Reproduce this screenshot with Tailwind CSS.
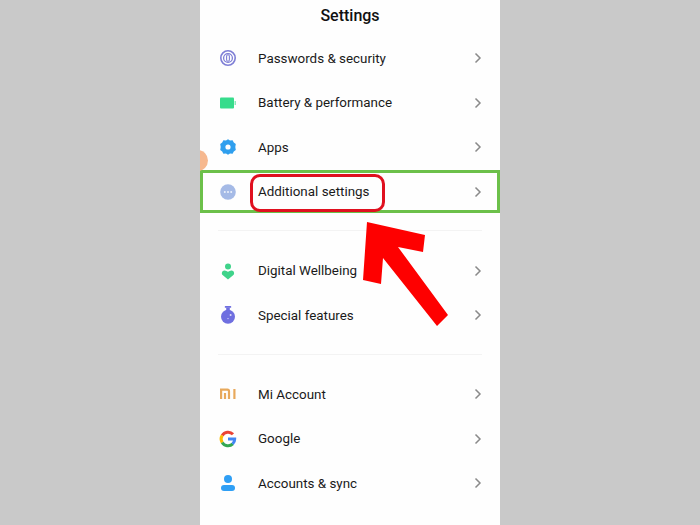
<!DOCTYPE html>
<html>
<head>
<meta charset="utf-8">
<script src="https://cdn.jsdelivr.net/npm/@tailwindcss/browser@4"></script>
</head>
<body class="m-0 bg-[#c9c9c9]">
<div class="relative flex justify-center w-[700px] h-[525px] overflow-hidden bg-[#c9c9c9] font-['Roboto','Liberation_Sans',sans-serif] text-[#1a1a1a]">
  <main class="relative w-[300px] h-[525px] bg-[#fefefe] overflow-hidden">
    <h1 class="h-[36px] pt-[5px] text-center text-[16px] leading-[22px] font-medium text-[#111]">Settings</h1>

    <div class="flex items-center h-[44.5px] pl-[18px] pr-[18px]">
      <svg class="w-[20px] h-[20px] mr-[20px]" viewBox="0 0 20 20" fill="none" stroke="#7f7fd6"><circle cx="10" cy="10" r="7.2" stroke-width="1.6"/><circle cx="10" cy="10" r="4.4" stroke-width="1.3"/><rect x="8.6" y="6.8" width="2.8" height="6.4" rx="1.4" stroke-width="1.1"/></svg>
      <span class="flex-1 pt-[1px] text-[13.4px] leading-[20px]">Passwords &amp; security</span>
      <svg class="w-[8px] h-[12px]" viewBox="0 0 8 12" fill="none" stroke="#8a8a8a" stroke-width="1.5"><path d="M1.5 1.5 L6 6 L1.5 10.5"/></svg>
    </div>

    <div class="flex items-center h-[44.5px] pl-[18px] pr-[18px]">
      <svg class="w-[20px] h-[20px] mr-[20px]" viewBox="0 0 20 20"><rect x="2" y="4.5" width="14" height="11" rx="1" fill="#37dc8c"/><rect x="16.5" y="8" width="1.5" height="4" fill="#8de8bb"/></svg>
      <span class="flex-1 pt-[1px] text-[13.4px] leading-[20px]">Battery &amp; performance</span>
      <svg class="w-[8px] h-[12px]" viewBox="0 0 8 12" fill="none" stroke="#8a8a8a" stroke-width="1.5"><path d="M1.5 1.5 L6 6 L1.5 10.5"/></svg>
    </div>

    <div class="flex items-center h-[44.5px] pl-[18px] pr-[18px]">
      <svg class="w-[20px] h-[20px] mr-[20px]" viewBox="0 0 20 20"><path fill="#2f9fee" fill-rule="evenodd" d="M10 2.2 L12 3.4 L14.6 3.3 L15.8 5.6 L17.8 7 L17.3 10 L17.8 13 L15.8 14.4 L14.6 16.7 L12 16.6 L10 17.8 L8 16.6 L5.4 16.7 L4.2 14.4 L2.2 13 L2.7 10 L2.2 7 L4.2 5.6 L5.4 3.3 L8 3.4 Z M10 7.4 A2.6 2.6 0 1 0 10 12.6 A2.6 2.6 0 1 0 10 7.4 Z"/></svg>
      <span class="flex-1 pt-[1px] text-[13.4px] leading-[20px]">Apps</span>
      <svg class="w-[8px] h-[12px]" viewBox="0 0 8 12" fill="none" stroke="#8a8a8a" stroke-width="1.5"><path d="M1.5 1.5 L6 6 L1.5 10.5"/></svg>
    </div>

    <div class="relative flex items-center h-[44.5px] pl-[18px] pr-[18px]">
      <svg class="w-[20px] h-[20px] mr-[20px]" viewBox="0 0 20 20"><circle cx="10" cy="10" r="7.8" fill="#a5bae6"/><circle cx="6.8" cy="10" r="1" fill="#eef2fb"/><circle cx="10" cy="10" r="1" fill="#eef2fb"/><circle cx="13.2" cy="10" r="1" fill="#eef2fb"/></svg>
      <span class="flex-1 pt-[1px] text-[13.4px] leading-[20px]">Additional settings</span>
      <svg class="w-[8px] h-[12px]" viewBox="0 0 8 12" fill="none" stroke="#8a8a8a" stroke-width="1.5"><path d="M1.5 1.5 L6 6 L1.5 10.5"/></svg>
      <div class="absolute left-0 right-0 top-[0.5px] h-[43px] border-[3px] border-[#6cc04a]"></div>
      <div class="absolute left-[50px] top-[4px] w-[135px] h-[38px] rounded-[10px] border-[3px] border-[#e0101f]"></div>
    </div>

    <div class="h-[34.25px] pt-[16px] px-[18px]"><div class="h-px bg-[#f3f3f3]"></div></div>

    <div class="flex items-center h-[44.5px] pl-[18px] pr-[18px]">
      <svg class="w-[20px] h-[20px] mr-[20px]" viewBox="0 0 20 20" fill="#3fd38a"><circle cx="10" cy="5.4" r="3"/><path d="M10 18.6 L4.6 14 C3 12.2 4.2 9.2 6.6 9.4 C8 9.5 9 10.2 10 10.8 C11 10.2 12 9.5 13.4 9.4 C15.8 9.2 17 12.2 15.4 14 Z"/></svg>
      <span class="flex-1 pt-[1px] text-[13.4px] leading-[20px]">Digital Wellbeing</span>
      <svg class="w-[8px] h-[12px]" viewBox="0 0 8 12" fill="none" stroke="#8a8a8a" stroke-width="1.5"><path d="M1.5 1.5 L6 6 L1.5 10.5"/></svg>
    </div>

    <div class="flex items-center h-[44.5px] pl-[18px] pr-[18px]">
      <svg class="w-[20px] h-[20px] mr-[20px]" viewBox="0 0 20 20"><rect x="6.8" y="1" width="6.4" height="1.8" rx="0.6" fill="#6f6fe0"/><rect x="8.2" y="2.5" width="3.6" height="4" fill="#6f6fe0"/><circle cx="10" cy="11.8" r="7" fill="#6f6fe0"/><circle cx="12.6" cy="10" r="1" fill="#dcdcf8"/><circle cx="10" cy="13.6" r="0.7" fill="#dcdcf8"/></svg>
      <span class="flex-1 pt-[1px] text-[13.4px] leading-[20px]">Special features</span>
      <svg class="w-[8px] h-[12px]" viewBox="0 0 8 12" fill="none" stroke="#8a8a8a" stroke-width="1.5"><path d="M1.5 1.5 L6 6 L1.5 10.5"/></svg>
    </div>

    <div class="h-[34.5px] pt-[16.5px] px-[18px]"><div class="h-px bg-[#f3f3f3]"></div></div>

    <div class="flex items-center h-[44.5px] pl-[18px] pr-[18px]">
      <svg class="w-[20px] h-[20px] mr-[20px]" viewBox="0 0 20 20" fill="none" stroke="#e8a95c" stroke-width="2.2"><path d="M3.1 15 V5.6 H9.4 C10.4 5.6 11 6.2 11 7.2 V15"/><path d="M7 9 V15"/><path d="M16.4 5 V15"/></svg>
      <span class="flex-1 pt-[1px] text-[13.4px] leading-[20px]">Mi Account</span>
      <svg class="w-[8px] h-[12px]" viewBox="0 0 8 12" fill="none" stroke="#8a8a8a" stroke-width="1.5"><path d="M1.5 1.5 L6 6 L1.5 10.5"/></svg>
    </div>

    <div class="flex items-center h-[44.5px] pl-[18px] pr-[18px]">
      <svg class="w-[20px] h-[20px] mr-[20px]" viewBox="0 0 20 20" fill="none" stroke-width="3"><path d="M15 5.2 A6.8 6.8 0 0 0 4.2 6.6" stroke="#ea4335"/><path d="M4.2 6.4 A6.8 6.8 0 0 0 4.2 13.6" stroke="#fbbc05"/><path d="M4.2 13.4 A6.8 6.8 0 0 0 14.8 14.9" stroke="#34a853"/><path d="M14.6 15 A6.8 6.8 0 0 0 16.7 10 H10" stroke="#4285f4"/></svg>
      <span class="flex-1 pt-[1px] text-[13.4px] leading-[20px]">Google</span>
      <svg class="w-[8px] h-[12px]" viewBox="0 0 8 12" fill="none" stroke="#8a8a8a" stroke-width="1.5"><path d="M1.5 1.5 L6 6 L1.5 10.5"/></svg>
    </div>

    <div class="flex items-center h-[44.5px] pl-[18px] pr-[18px]">
      <svg class="w-[20px] h-[20px] mr-[20px]" viewBox="0 0 20 20" fill="#2f9ff5"><circle cx="10" cy="6" r="4"/><rect x="3" y="12" width="14" height="6" rx="3"/></svg>
      <span class="flex-1 pt-[1px] text-[13.4px] leading-[20px]">Accounts &amp; sync</span>
      <svg class="w-[8px] h-[12px]" viewBox="0 0 8 12" fill="none" stroke="#8a8a8a" stroke-width="1.5"><path d="M1.5 1.5 L6 6 L1.5 10.5"/></svg>
    </div>

    <div class="absolute left-[-13px] top-[150px] w-[21px] h-[21px] rounded-full bg-[#f6b88f]"></div>
  </main>

  <svg class="absolute left-0 top-0 w-[700px] h-[525px] pointer-events-none" viewBox="0 0 700 525"><polygon fill="#fe0000" points="367,222 425,235 423,252 398,247 448,315 437,326 383,258 381,284 363,280"/></svg>
</div>
</body>
</html>
